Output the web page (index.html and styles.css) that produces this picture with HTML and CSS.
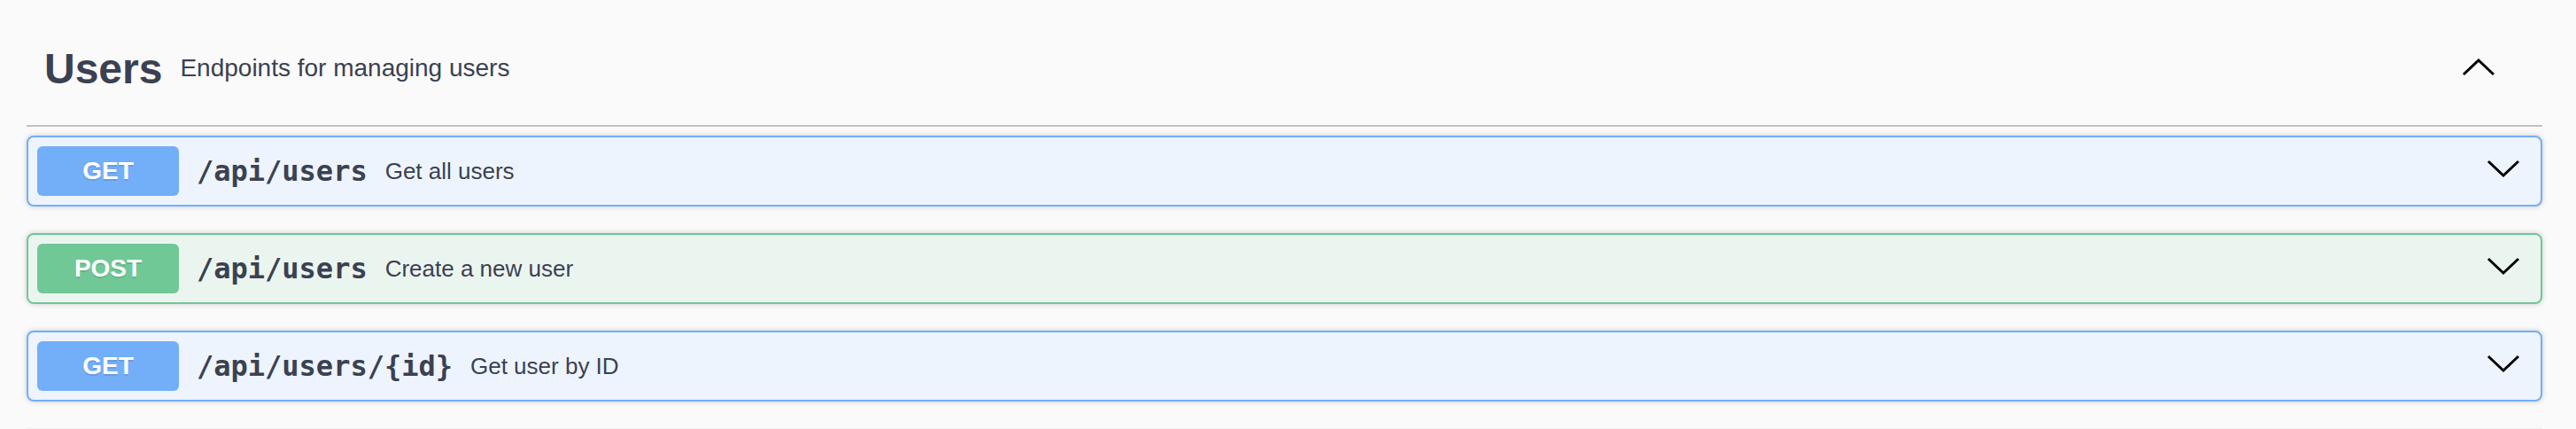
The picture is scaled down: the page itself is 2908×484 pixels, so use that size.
FILE: index.html
```html
<!DOCTYPE html>
<html lang="en">
<head>
<meta charset="utf-8">
<title>Users</title>
<link rel="stylesheet" href="styles.css">
</head>
<body>
<div class="wrapper">
  <section class="tag-section">
    <div class="tag">
      <h3 class="tag-title">Users</h3>
      <small class="tag-desc">Endpoints for managing users</small>
      <button class="tag-toggle" aria-label="Collapse">
        <svg width="40" height="40" viewBox="0 0 40 40"><polyline points="3,27 20,11 37,27" fill="none" stroke="#000" stroke-width="3"/></svg>
      </button>
    </div>
    <div class="ops">
      <div class="opblock get">
        <span class="method">GET</span>
        <span class="path">/api/users</span>
        <span class="summary">Get all users</span>
        <svg class="chev" width="40" height="40" viewBox="0 0 40 40"><polyline points="3,9 20,25 37,9" fill="none" stroke="#000" stroke-width="3"/></svg>
      </div>
      <div class="opblock post">
        <span class="method">POST</span>
        <span class="path">/api/users</span>
        <span class="summary">Create a new user</span>
        <svg class="chev" width="40" height="40" viewBox="0 0 40 40"><polyline points="3,9 20,25 37,9" fill="none" stroke="#000" stroke-width="3"/></svg>
      </div>
      <div class="opblock get">
        <span class="method">GET</span>
        <span class="path">/api/users/{id}</span>
        <span class="summary">Get user by ID</span>
        <svg class="chev" width="40" height="40" viewBox="0 0 40 40"><polyline points="3,9 20,25 37,9" fill="none" stroke="#000" stroke-width="3"/></svg>
      </div>
    </div>
  </section>
  <div class="next-section"></div>
</div>
</body>
</html>
```
FILE: styles.css
```css
html, body {
  margin: 0;
  padding: 0;
  background: #fafafa;
}
body {
  font-family: "Liberation Sans", Arial, sans-serif;
  color: #3b4151;
}
.wrapper {
  padding: 10px 38px 0 30px;
}
.tag {
  display: flex;
  align-items: center;
  height: 133px;
  box-sizing: border-box;
  padding: 3px 52px 0 20px;
  border-bottom: 2px solid rgba(59, 65, 81, 0.3);
  margin-bottom: 10px;
}
.tag-title {
  margin: 0;
  font-size: 48px;
  font-weight: 700;
  line-height: 55px;
  color: #3b4151;
}
.tag-desc {
  flex: 1;
  font-size: 28px;
  padding: 0 20px;
  color: #3b4151;
}
.tag-toggle {
  border: 0;
  padding: 0;
  margin: 0;
  background: none;
  display: flex;
  width: 40px;
  height: 40px;
}
.ops {
  display: flex;
  flex-direction: column;
  gap: 30px;
}
.opblock {
  display: flex;
  align-items: center;
  border: 2px solid;
  border-radius: 8px;
  padding: 10px 22px 10px 10px;
  box-shadow: 0 0 6px rgba(0, 0, 0, 0.19);
}
.opblock.get {
  background: #edf4fd;
  border-color: #73aef8;
}
.opblock.post {
  background: #ebf5f0;
  border-color: #70c896;
}
.method {
  min-width: 160px;
  box-sizing: border-box;
  padding: 12px 0;
  border-radius: 6px;
  color: #fff;
  font-size: 28px;
  line-height: 32px;
  font-weight: 700;
  text-align: center;
  text-shadow: 0 2px 0 rgba(0, 0, 0, 0.1);
}
.get .method { background: #73aef8; }
.post .method { background: #70c896; }
.path {
  font-family: "DejaVu Sans Mono", monospace;
  font-weight: 700;
  font-size: 32px;
  padding: 0 20px;
  color: #3b4151;
}
.summary {
  flex: 1;
  font-size: 26px;
  color: #3b4151;
}
.chev {
  display: block;
}
.next-section {
  margin-top: 30px;
  border-top: 1px solid #f0f0f0;
}
```
